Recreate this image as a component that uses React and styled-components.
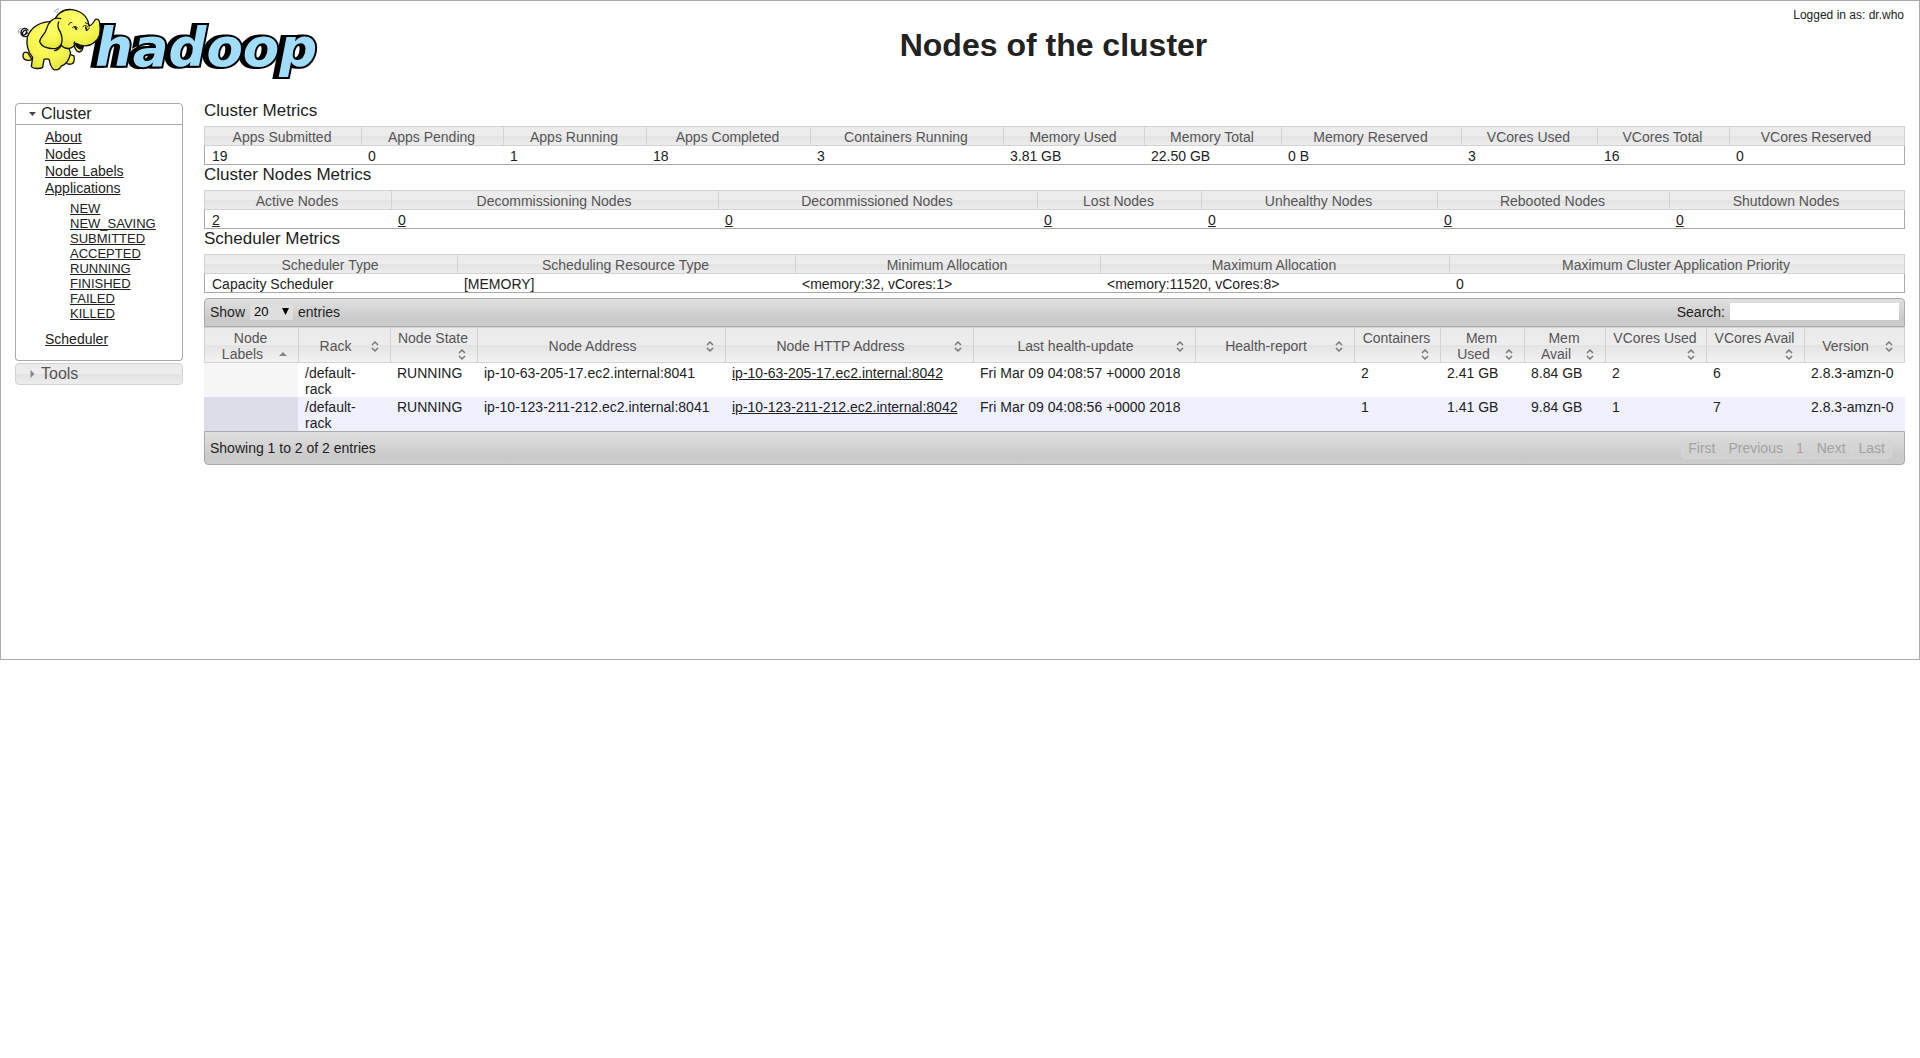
import React, { useState } from "react";
import styled, { createGlobalStyle } from "styled-components";

const GlobalStyle = createGlobalStyle`
  *, *::before, *::after { box-sizing: border-box; }
  body {
    margin: 0;
    background: #fff;
    color: #222;
    font: 14px/16px "Liberation Sans", Arial, sans-serif;
  }
  a { color: inherit; }
  button, input, select { font-family: inherit; }
`;

const glass = "linear-gradient(#ebebeb, #ededed 50%, #e3e3e3 50%, #ececec)";
const soft = "linear-gradient(#e0e0e0, #cacaca 75%, #cccccc)";

const Page = styled.div`
  min-height: 660px;
  border: 1px solid #aaa;
`;

const Header = styled.header`
  display: grid;
  grid-template-columns: 202px 1fr;
  height: 100px;
  padding-right: 15px;
`;

const LogoLink = styled.a`
  display: block;
  width: 202px;
`;

const LogoArt = styled.svg`
  display: block;
  width: 320px;
  height: 90px;
`;

const Wordmark = styled.text`
  font: italic 700 53px "DejaVu Sans", Inter, sans-serif;
  fill: #a0dcfb;
  stroke: #000;
  stroke-width: 4px;
  stroke-linejoin: miter;
  paint-order: stroke;
  filter: drop-shadow(-4px 0 0 #000);
`;

const Title = styled.h1`
  grid-area: 1 / 2;
  margin: 0;
  padding-top: 24px;
  font-size: 32px;
  line-height: 40px;
  text-align: center;
`;

const User = styled.div`
  grid-area: 1 / 2;
  justify-self: end;
  align-self: start;
  padding-top: 6px;
  font-size: 12px;
  line-height: 16px;
`;

const Columns = styled.div`
  display: flex;
  align-items: flex-start;
  gap: 21px;
  padding: 0 14px;
`;

const Sidebar = styled.nav`
  flex: 0 0 168px;
  display: flex;
  flex-direction: column;
  gap: 2px;
  padding-top: 2px;
`;

const PanelHeading = styled.h3`
  margin: 0;
  font-weight: normal;
`;

const PanelButton = styled.button`
  display: flex;
  align-items: center;
  gap: 5px;
  width: 100%;
  height: 22px;
  padding: 0 0 0 13px;
  border: 1px solid ${(p) => (p.$open ? "#aaa" : "#d3d3d3")};
  border-radius: ${(p) => (p.$open ? "4px 4px 0 0" : "4px")};
  background: ${(p) => (p.$open ? "#fff" : glass)};
  color: ${(p) => (p.$open ? "#222" : "#555")};
  font-size: 16px;
  line-height: 18px;
  text-align: left;
`;

const Marker = styled.svg`
  width: 7px;
  height: 8px;
  fill: ${(p) => (p.$open ? "#454545" : "#888")};
`;

const PanelBody = styled.div`
  padding: 4px 0 12px 29px;
  border: 1px solid #aaa;
  border-top: 0;
  border-radius: 0 0 4px 4px;
`;

const Links = styled.ul`
  margin: 0;
  padding: 0;
  list-style: none;
  line-height: 17px;
`;

const SubLinks = styled(Links)`
  margin: 4px 0 10px;
  padding-left: 25px;
  font-size: 13px;
  line-height: 15px;
`;

const Main = styled.main`
  flex: 1;
  min-width: 0;
`;

const SectionTitle = styled.h2`
  margin: 0 0 5px;
  font-size: 17px;
  font-weight: normal;
  line-height: 20px;
`;

const Table = styled.table`
  width: 100%;
  table-layout: fixed;
  border-collapse: separate;
  border-spacing: 0;
`;

const HeadCell = styled.th`
  padding: 2px 2px 0 0;
  border: solid #d3d3d3;
  border-width: 1px 0 1px 1px;
  background: ${glass};
  color: #555;
  font-weight: normal;
  line-height: 16px;
  &:last-child { border-right-width: 1px; }
`;

const MetricCell = styled.td`
  padding: 2px 7px 0;
  border-bottom: 1px solid #aaa;
  line-height: 16px;
  &:first-child { border-left: 1px solid #aaa; }
  &:last-child { border-right: 1px solid #aaa; }
`;

const Bar = styled.div`
  display: flex;
  justify-content: space-between;
  align-items: center;
  height: ${(p) => (p.$foot ? "34px" : "29px")};
  margin-top: ${(p) => (p.$foot ? "0" : "5px")};
  padding: ${(p) => (p.$foot ? "0 5px" : "0 5px 2px")};
  border: 1px solid #aaa;
  border-radius: ${(p) => (p.$foot ? "0 0 4px 4px" : "4px 4px 0 0")};
  background: ${soft};
`;

const Field = styled.label`
  display: flex;
  align-items: center;
  gap: 5px;
`;

const SelectBox = styled.span`
  display: grid;
  align-items: center;
  width: 43px;
  height: 16px;
  background: #dedede;
`;

const Select = styled.select`
  grid-area: 1 / 1;
  width: 100%;
  height: 16px;
  padding: 0 4px;
  border: 0;
  appearance: none;
  background: transparent;
  color: #000;
  font-size: 13px;
  line-height: 16px;
`;

const SelectArrow = styled.svg`
  grid-area: 1 / 1;
  justify-self: end;
  width: 7px;
  height: 7px;
  margin-right: 4px;
  pointer-events: none;
`;

const SearchInput = styled.input`
  width: 169px;
  height: 17px;
  padding: 0 2px;
  border: 0;
  background: #fff;
  font-size: 13px;
`;

const SortCell = styled(HeadCell)`
  height: 36px;
  padding: 2px 7px 0 5px;
  line-height: 16px;
  background: linear-gradient(#eaeaea, #ededed 50%, #e3e3e3 50%, #f3f3f3);
`;

const SortIcon = styled.svg`
  float: right;
  width: 16px;
  height: 16px;
  fill: ${(p) => (p.$sorted ? "#888" : "none")};
  stroke: ${(p) => (p.$sorted ? "none" : "#777")};
`;

const DataRow = styled.tr`
  background: ${(p) => (p.$even ? "#f0f0ff" : "#fff")};
`;

const DataCell = styled.td`
  height: 34px;
  padding: 2px 0 0 7px;
  vertical-align: top;
  white-space: nowrap;
  ${DataRow} &:first-child { background: ${(p) => (p.$even ? "#dddde9" : "#f6f6f6")}; }
`;

const Pager = styled.div`
  display: flex;
  margin-right: 7px;
`;

const PageButton = styled.button`
  height: 21px;
  padding: 0 6px;
  border: solid #d6d6d6;
  border-width: 1px 0 1px 1px;
  background: linear-gradient(#d8d8d8, #d0d0d0);
  color: #a2a2a2;
  font-size: 14px;
  line-height: 19px;
  &:first-child { border-radius: 4px 0 0 4px; }
  &:last-child { border-radius: 0 4px 4px 0; border-right-width: 1px; }
`;

const appStates = ["NEW", "NEW_SAVING", "SUBMITTED", "ACCEPTED", "RUNNING", "FINISHED", "FAILED", "KILLED"];

const metricTables = [
  {
    title: "Cluster Metrics",
    columns: [
      ["Apps Submitted", 157, "19"],
      ["Apps Pending", 142, "0"],
      ["Apps Running", 143, "1"],
      ["Apps Completed", 164, "18"],
      ["Containers Running", 193, "3"],
      ["Memory Used", 141, "3.81 GB"],
      ["Memory Total", 137, "22.50 GB"],
      ["Memory Reserved", 180, "0 B"],
      ["VCores Used", 136, "3"],
      ["VCores Total", 132, "16"],
      ["VCores Reserved", 176, "0"],
    ],
  },
  {
    title: "Cluster Nodes Metrics",
    linked: true,
    columns: [
      ["Active Nodes", 187, "2"],
      ["Decommissioning Nodes", 327, "0"],
      ["Decommissioned Nodes", 319, "0"],
      ["Lost Nodes", 164, "0"],
      ["Unhealthy Nodes", 236, "0"],
      ["Rebooted Nodes", 232, "0"],
      ["Shutdown Nodes", 236, "0"],
    ],
  },
  {
    title: "Scheduler Metrics",
    columns: [
      ["Scheduler Type", 253, "Capacity Scheduler"],
      ["Scheduling Resource Type", 338, "[MEMORY]"],
      ["Minimum Allocation", 305, "<memory:32, vCores:1>"],
      ["Maximum Allocation", 349, "<memory:11520, vCores:8>"],
      ["Maximum Cluster Application Priority", 456, "0"],
    ],
  },
];

const nodeColumns = [
  [["Node", "Labels"], 94],
  [["Rack"], 92],
  [["Node State"], 87],
  [["Node Address"], 248],
  [["Node HTTP Address"], 248],
  [["Last health-update"], 222],
  [["Health-report"], 159],
  [["Containers"], 86],
  [["Mem", "Used"], 84],
  [["Mem", "Avail"], 81],
  [["VCores Used"], 101],
  [["VCores Avail"], 98],
  [["Version"], 101],
];

const nodes = [
  ["", ["/default-", "rack"], "RUNNING", "ip-10-63-205-17.ec2.internal:8041", "ip-10-63-205-17.ec2.internal:8042", "Fri Mar 09 04:08:57 +0000 2018", "", "2", "2.41 GB", "8.84 GB", "2", "6", "2.8.3-amzn-0"],
  ["", ["/default-", "rack"], "RUNNING", "ip-10-123-211-212.ec2.internal:8041", "ip-10-123-211-212.ec2.internal:8042", "Fri Mar 09 04:08:56 +0000 2018", "", "1", "1.41 GB", "9.84 GB", "1", "7", "2.8.3-amzn-0"],
];

const HTTP_COLUMN = 4;

function ColumnWidths({ widths }) {
  const total = widths.reduce((a, b) => a + b, 0);
  return (
    <colgroup>
      {widths.map((w, i) => (
        <col key={i} style={{ width: `${(w / total) * 100}%` }} />
      ))}
    </colgroup>
  );
}

function Lines({ parts }) {
  return parts.map((part, i) => (
    <React.Fragment key={part}>
      {i > 0 && <br />}
      {part}
    </React.Fragment>
  ));
}

function Logo() {
  return (
    <LogoArt viewBox="1 1 320 90" role="img" aria-label="Hadoop">
      <defs>
        <radialGradient id="hide" cx="0.5" cy="0.3" r="0.75">
          <stop offset="0" stopColor="#ffff70" />
          <stop offset="0.6" stopColor="#f6f650" />
          <stop offset="1" stopColor="#dfe23a" />
        </radialGradient>
      </defs>
      <Wordmark x="95" y="66">hadoop</Wordmark>
      <g transform="scale(0.3333)" stroke="#111" strokeWidth="4" strokeLinecap="round" strokeLinejoin="round" fill="url(#hide)">
        <path d="M83 158 C70 152 66 166 71 175 C76 184 92 182 96 178 Z" />
        <path d="M196 158 L222 168 C224 180 222 188 217 191 C208 194 200 192 197 186 Z" />
        <path d="M82 98 C64 116 65 98 72 92 C80 88 84 96 77 101 M83 108 C70 114 60 104 64 92 C68 82 80 84 84 90" fill="none" />
        <path d="M160 64 C132 64 97 74 82 110 C78 136 84 156 98 172 L94 200 C100 207 120 207 128 202 L132 178 C138 176 144 176 148 180 C150 192 152 203 162 209 C172 211 180 207 184 198 C198 194 208 180 212 158 L196 120 Z" />
        <path d="M222 128 C222 144 230 156 238 156 C247 154 250 146 248 137 Z" />
        <path d="M162 70 C166 42 190 26 216 29 C246 33 264 52 267 78 C276 76 280 68 284 61 C291 53 299 60 299 69 C304 98 298 118 282 128 C268 139 246 142 228 130 C218 146 198 152 184 136 Z" />
        <path d="M182 56 C158 48 144 70 140 86 C136 104 120 110 119 124 C124 142 148 148 168 145 C188 140 190 118 181 96 C174 86 172 76 176 66" />
        <path d="M226 131 C236 139 244 141 250 138 C248 144 243 147 240 147 C233 144 228 138 226 131 Z" fill="#111" />
        <path d="M184 136 C178 146 172 150 164 152 M224 126 C222 128 222 132 224 134" fill="none" />
        <path d="M217 83 C222 78 228 78 233 84 M206 74 C208 68 212 66 216 68 M249 80 C254 74 260 75 264 82 M256 68 L268 74 M262 90 L268 85" fill="none" strokeWidth="3" />
        <path d="M225 82 L229 88 M257 82 L260 91" strokeWidth="5" />
        <path d="M54 94 L58 87 L64 85 M56 99 L57 94 M163 36 L168 29 L176 27 M170 39 L174 34" fill="none" stroke="#777" strokeWidth="2" />
      </g>
    </LogoArt>
  );
}

function Panel({ title, initiallyOpen, children }) {
  const [open, setOpen] = useState(initiallyOpen);
  return (
    <section>
      <PanelHeading>
        <PanelButton type="button" $open={open} aria-expanded={open} onClick={() => setOpen(!open)}>
          <Marker viewBox="0 0 7 8" $open={open} aria-hidden="true">
            <path d={open ? "M0 2h7L3.500 6z" : "M1.500 0v8L5.500 4z"} />
          </Marker>
          {title}
        </PanelButton>
      </PanelHeading>
      {open && children && <PanelBody>{children}</PanelBody>}
    </section>
  );
}

function MetricTable({ title, columns, linked }) {
  return (
    <section>
      <SectionTitle>{title}</SectionTitle>
      <Table aria-label={title}>
        <ColumnWidths widths={columns.map((c) => c[1])} />
        <thead>
          <tr>
            {columns.map(([name]) => (
              <HeadCell key={name} scope="col">{name}</HeadCell>
            ))}
          </tr>
        </thead>
        <tbody>
          <tr>
            {columns.map(([name, , value]) => (
              <MetricCell key={name}>{linked ? <a href="#nodes">{value}</a> : value}</MetricCell>
            ))}
          </tr>
        </tbody>
      </Table>
    </section>
  );
}

function SortMark({ sorted }) {
  return (
    <SortIcon viewBox="0 0 16 16" $sorted={sorted} aria-hidden="true">
      {sorted ? <path d="M4 10h8L8 6z" /> : <path d="M5 7l3-3 3 3M5 10l3 3 3-3" strokeWidth="1.500" />}
    </SortIcon>
  );
}

function NodesTable() {
  return (
    <section>
      <Bar>
        <Field>
          Show
          <SelectBox>
            <Select defaultValue="20" aria-label="Entries per page">
              <option>20</option>
              <option>40</option>
              <option>60</option>
              <option>80</option>
              <option>100</option>
            </Select>
            <SelectArrow viewBox="0 0 7 7" aria-hidden="true">
              <path d="M0 0h7L3.500 7z" />
            </SelectArrow>
          </SelectBox>
          entries
        </Field>
        <Field>
          Search:
          <SearchInput type="text" />
        </Field>
      </Bar>
      <Table aria-label="Nodes">
        <ColumnWidths widths={nodeColumns.map((c) => c[1])} />
        <thead>
          <tr>
            {nodeColumns.map(([parts], i) => (
              <SortCell key={parts.join(" ")} scope="col" aria-sort={i === 0 ? "ascending" : "none"}>
                <Lines parts={parts} />
                <SortMark sorted={i === 0} />
              </SortCell>
            ))}
          </tr>
        </thead>
        <tbody>
          {nodes.map((row, r) => (
            <DataRow key={r} $even={r % 2 === 1}>
              {row.map((value, i) => (
                <DataCell key={i} $even={r % 2 === 1}>
                  {Array.isArray(value) ? <Lines parts={value} /> : i === HTTP_COLUMN ? <a href="#node">{value}</a> : value}
                </DataCell>
              ))}
            </DataRow>
          ))}
        </tbody>
      </Table>
      <Bar $foot>
        <span>Showing 1 to 2 of 2 entries</span>
        <Pager>
          {["First", "Previous", "1", "Next", "Last"].map((label) => (
            <PageButton key={label} type="button" disabled>{label}</PageButton>
          ))}
        </Pager>
      </Bar>
    </section>
  );
}

export default function App() {
  return (
    <>
      <GlobalStyle />
      <Page>
        <Header>
          <LogoLink href="#home"><Logo /></LogoLink>
          <Title>Nodes of the cluster</Title>
          <User>Logged in as: dr.who</User>
        </Header>
        <Columns>
          <Sidebar>
            <Panel title="Cluster" initiallyOpen>
              <Links>
                <li><a href="#about">About</a></li>
                <li><a href="#nodes">Nodes</a></li>
                <li><a href="#labels">Node Labels</a></li>
                <li>
                  <a href="#apps">Applications</a>
                  <SubLinks>
                    {appStates.map((state) => (
                      <li key={state}><a href={`#${state}`}>{state}</a></li>
                    ))}
                  </SubLinks>
                </li>
                <li><a href="#scheduler">Scheduler</a></li>
              </Links>
            </Panel>
            <Panel title="Tools" />
          </Sidebar>
          <Main>
            {metricTables.map((t) => (
              <MetricTable key={t.title} {...t} />
            ))}
            <NodesTable />
          </Main>
        </Columns>
      </Page>
    </>
  );
}
